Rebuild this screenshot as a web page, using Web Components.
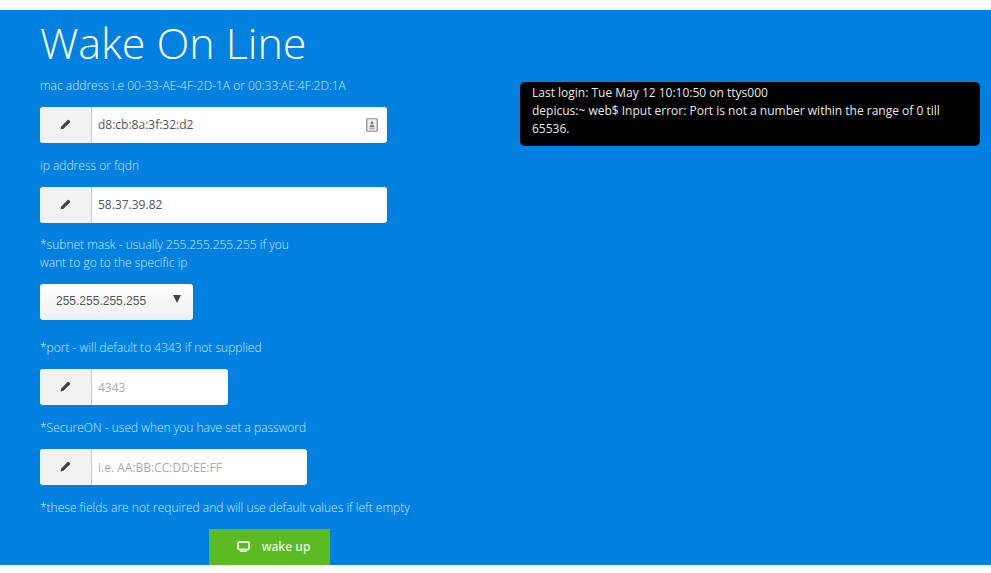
<!DOCTYPE html>
<html>
<head>
<meta charset="utf-8">
<title>Wake On Line</title>
<style>
    html, body { margin: 0; padding: 0; background: #fff; }
    body { padding-top: 10px; font-family: "Open Sans", sans-serif; }
</style>
</head>
<body>

<wol-page>
    <h1 slot="title">Wake On Line</h1>

    <wol-label gap="7">mac address i.e 00-33-AE-4F-2D-1A or 00:33:AE:4F:2D:1A</wol-label>
    <wol-input width="347" value="d8:cb:8a:3f:32:d2" contact></wol-input>

    <wol-label gap="14">ip address or fqdn</wol-label>
    <wol-input width="347" value="58.37.39.82"></wol-input>

    <wol-label gap="13">*subnet mask - usually 255.255.255.255 if you<br>want to go to the specific ip</wol-label>
    <wol-select value="255.255.255.255"></wol-select>

    <wol-label gap="19">*port - will default to 4343 if not supplied</wol-label>
    <wol-input width="188" placeholder="4343"></wol-input>

    <wol-label gap="14">*SecureON - used when you have set a password</wol-label>
    <wol-input width="267" placeholder="i.e. AA:BB:CC:DD:EE:FF"></wol-input>

    <wol-label gap="14">*these fields are not required and will use default values if left empty</wol-label>
    <wol-button>wake up</wol-button>

    <wol-terminal slot="side">Last login: Tue May 12 10:10:50 on ttys000<br>depicus:~ web$ Input error: Port is not a number within the range of 0 till 65536.</wol-terminal>
</wol-page>

<script>
class WolPage extends HTMLElement {
    constructor() {
        super();
        this._shadow = this.attachShadow({mode: "open"});
        this._shadow.innerHTML = `
            <style>
                :host {
                    display: grid;
                    grid-template-columns: 480px 460px;
                    height: 555px;
                    padding-left: 40px;
                    box-sizing: border-box;
                    background: #0080DF;
                    overflow: hidden;
                }
                .side { padding-top: 72px; }
                ::slotted(h1) {
                    margin: 6px 0 0;
                    font: 300 43px/54px "Open Sans", sans-serif;
                    letter-spacing: -0.05px;
                    color: #fff;
                }
            </style>
            <div>
                <slot name="title"></slot>
                <slot></slot>
            </div>
            <div class="side"><slot name="side"></slot></div>
        `;
    }
}

class WolLabel extends HTMLElement {
    constructor() {
        super();
        this._shadow = this.attachShadow({mode: "open"});
    }
    connectedCallback() {
        this._shadow.innerHTML = `
            <style>
                :host {
                    display: block;
                    margin-top: ${this.getAttribute("gap") ?? 14}px;
                    margin-bottom: 12px;
                    font: 300 12px/18px "Open Sans", sans-serif;
                    color: #D2EAFB;
                    white-space: nowrap;
                }
            </style>
            <slot></slot>
        `;
    }
}

class WolInput extends HTMLElement {
    constructor() {
        super();
        this._shadow = this.attachShadow({mode: "open"});
    }
    connectedCallback() {
        const value = this.getAttribute("value");
        const text = value ?? this.getAttribute("placeholder") ?? "";
        const contact = this.hasAttribute("contact") ? `
            <svg class="contact" width="12" height="14" viewBox="0 0 12 14">
                <rect x="0.75" y="0.75" width="10.5" height="12.5" rx="1" fill="#EDEDED" stroke="#8A8A8A" stroke-width="1.2"/>
                <circle cx="6" cy="5" r="1.4" fill="#777"/>
                <path d="M3.5 9.2c0-1.5 1-2.2 2.5-2.2s2.5.7 2.5 2.2z" fill="#777"/>
                <rect x="3.5" y="10.2" width="5" height="1" fill="#999"/>
            </svg>` : "";
        this._shadow.innerHTML = `
            <style>
                :host {
                    display: flex;
                    align-items: stretch;
                    width: ${this.getAttribute("width")}px;
                    height: 36px;
                    border-radius: 3px;
                    overflow: hidden;
                    background: #fff;
                    font: 400 12px "Open Sans", sans-serif;
                }
                .addon {
                    flex: 0 0 52px;
                    display: flex;
                    align-items: center;
                    justify-content: center;
                    background: #F2F2F2;
                    border-right: 1px solid #C9CDD0;
                    box-sizing: border-box;
                }
                .addon svg { margin-bottom: 1px; }
                .text {
                    flex: 1;
                    display: flex;
                    align-items: center;
                    padding: 0 0 ${value !== null ? 1 : 0}px 6px;
                    color: ${value !== null ? "#555" : "#AAA"};
                }
                .contact { align-self: center; margin-right: 9px; }
            </style>
            <span class="addon">
                <svg width="11" height="11" viewBox="0 0 11 11">
                    <path d="M0.5 10.5l.7-3L7.6 1.1a1 1 0 0 1 1.4 0l.9.9a1 1 0 0 1 0 1.4L3.5 9.8z" fill="#444"/>
                </svg>
            </span>
            <span class="text">${text}</span>
            ${contact}
        `;
    }
}

class WolSelect extends HTMLElement {
    constructor() {
        super();
        this._shadow = this.attachShadow({mode: "open"});
    }
    connectedCallback() {
        this._shadow.innerHTML = `
            <style>
                :host {
                    display: flex;
                    align-items: center;
                    justify-content: space-between;
                    width: 153px;
                    height: 36px;
                    padding: 0 12px 2px 16px;
                    box-sizing: border-box;
                    border-radius: 3px;
                    background: linear-gradient(#fff, #EFEFEF);
                    font: 400 12px "Liberation Sans", Arial, sans-serif;
                    color: #555;
                }
                i {
                    width: 0;
                    height: 0;
                    margin-bottom: 5px;
                    border: 4.5px solid transparent;
                    border-top: 8px solid #444;
                    border-bottom: 0;
                }
            </style>
            <span>${this.getAttribute("value")}</span>
            <i></i>
        `;
    }
}

class WolButton extends HTMLElement {
    constructor() {
        super();
        this._shadow = this.attachShadow({mode: "open"});
        this._shadow.innerHTML = `
            <style>
                :host {
                    display: flex;
                    align-items: center;
                    justify-content: center;
                    gap: 12px;
                    width: 121px;
                    height: 36px;
                    padding: 0 0 2px 8px;
                    box-sizing: border-box;
                    margin-left: 169px;
                    background: #5ABB23;
                    color: #E4F5D8;
                    font: 600 12px "Open Sans", sans-serif;
                }
            </style>
            <svg width="13" height="11" viewBox="0 0 13 11">
                <rect x="1" y="1" width="11" height="7.5" rx="1.5" fill="none" stroke="#E4F5D8" stroke-width="2"/>
                <rect x="3" y="9.5" width="7" height="1.5" fill="#E4F5D8"/>
            </svg>
            <slot></slot>
        `;
    }
}

class WolTerminal extends HTMLElement {
    constructor() {
        super();
        this._shadow = this.attachShadow({mode: "open"});
        this._shadow.innerHTML = `
            <style>
                :host {
                    display: block;
                    box-sizing: border-box;
                    width: 460px;
                    padding: 2px 12px 8px;
                    border-radius: 5px;
                    background: #000;
                    color: #E8E8E8;
                    font: 400 12px/18px "Open Sans", sans-serif;
                }
            </style>
            <slot></slot>
        `;
    }
}

customElements.define("wol-page", WolPage);
customElements.define("wol-label", WolLabel);
customElements.define("wol-input", WolInput);
customElements.define("wol-select", WolSelect);
customElements.define("wol-button", WolButton);
customElements.define("wol-terminal", WolTerminal);
</script>
</body>
</html>
